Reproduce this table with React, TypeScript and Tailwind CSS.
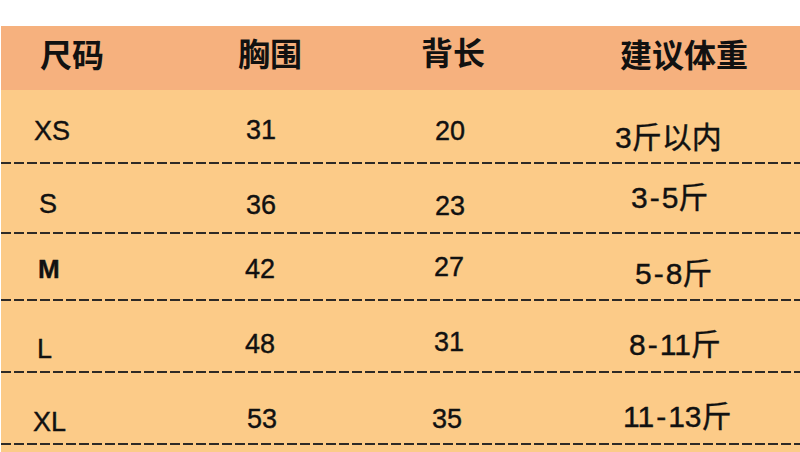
import React from "react";

type Cell = { text: React.ReactNode; cls: string };
type Row = { h: string; cells: Cell[] };

const font = { fontFamily: '"Liberation Sans","Noto Sans CJK SC",sans-serif' };

function R({ a, b }: { a: string; b: string }) {
  return (
    <>
      {a}
      <span className="mx-[2px]">-</span>
      {b}
    </>
  );
}

const rows: Row[] = [
  {
    h: "h-[72px]",
    cells: [
      { text: "XS", cls: "w-[200px] pl-[33px] pt-[28px] text-[27px]" },
      { text: "31", cls: "w-[180px] pl-[45px] pt-[27px] text-[27px]" },
      { text: "20", cls: "w-[180px] pl-[54px] pt-[28px] text-[27px]" },
      { text: "3斤以内", cls: "w-[239px] pl-[54px] pt-[33px] text-[30px]" },
    ],
  },
  {
    h: "h-[68px]",
    cells: [
      { text: "S", cls: "w-[200px] pl-[38px] pt-[27px] text-[27px]" },
      { text: "36", cls: "w-[180px] pl-[45px] pt-[28px] text-[27px]" },
      { text: "23", cls: "w-[180px] pl-[54px] pt-[29px] text-[27px]" },
      { text: <R a="3" b="5斤" />, cls: "w-[239px] pl-[70px] pt-[19px] text-[30px]" },
    ],
  },
  {
    h: "h-[65px]",
    cells: [
      { text: "M", cls: "w-[200px] pl-[37px] pt-[22px] text-[26px] font-bold" },
      { text: "42", cls: "w-[180px] pl-[44px] pt-[22px] text-[27px]" },
      { text: "27", cls: "w-[180px] pl-[53px] pt-[20px] text-[27px]" },
      { text: <R a="5" b="8斤" />, cls: "w-[239px] pl-[74px] pt-[25px] text-[30px]" },
    ],
  },
  {
    h: "h-[70px]",
    cells: [
      { text: "L", cls: "w-[200px] pl-[36px] pt-[35px] text-[27px]" },
      { text: "48", cls: "w-[180px] pl-[44px] pt-[30px] text-[27px]" },
      { text: "31", cls: "w-[180px] pl-[53px] pt-[28px] text-[27px]" },
      { text: <R a="8" b="11斤" />, cls: "w-[239px] pl-[68px] pt-[29px] text-[30px]" },
    ],
  },
  {
    h: "h-[70px]",
    cells: [
      { text: "XL", cls: "w-[200px] pl-[32px] pt-[36px] text-[27px]" },
      { text: "53", cls: "w-[180px] pl-[46px] pt-[33px] text-[27px]" },
      { text: "35", cls: "w-[180px] pl-[51px] pt-[33px] text-[27px]" },
      { text: <R a="11" b="13斤" />, cls: "w-[239px] pl-[62px] pt-[29px] text-[30px]" },
    ],
  },
];

function Dashed() {
  return (
    <div className="h-[2px] w-full bg-[repeating-linear-gradient(90deg,#2e2a26_0px,#2e2a26_10px,transparent_10px,transparent_13px)]" />
  );
}

export default function App() {
  return (
    <div className="w-[800px] h-[452px] bg-white overflow-hidden text-[#111]" style={font}>
      <div className="h-[26px]" />
      <div className="ml-[1px] w-[799px] bg-[#fccb88] h-[426px]">
        <div className="h-[64px] bg-[#f6b17e] flex items-start font-bold text-[32px] leading-none">
          <div className="w-[200px] pl-[39px] pt-[14px]">尺码</div>
          <div className="w-[180px] pl-[37px] pt-[13px]">胸围</div>
          <div className="w-[180px] pl-[40px] pt-[12px]">背长</div>
          <div className="w-[239px] pl-[59px] pt-[14px]">建议体重</div>
        </div>
        {rows.map((r, i) => (
          <div key={i}>
            <div className={`${r.h} flex items-start leading-none [-webkit-text-stroke:0.4px_#111]`}>
              {r.cells.map((c, j) => (
                <div key={j} className={c.cls}>
                  {c.text}
                </div>
              ))}
            </div>
            <Dashed />
          </div>
        ))}
      </div>
    </div>
  );
}
